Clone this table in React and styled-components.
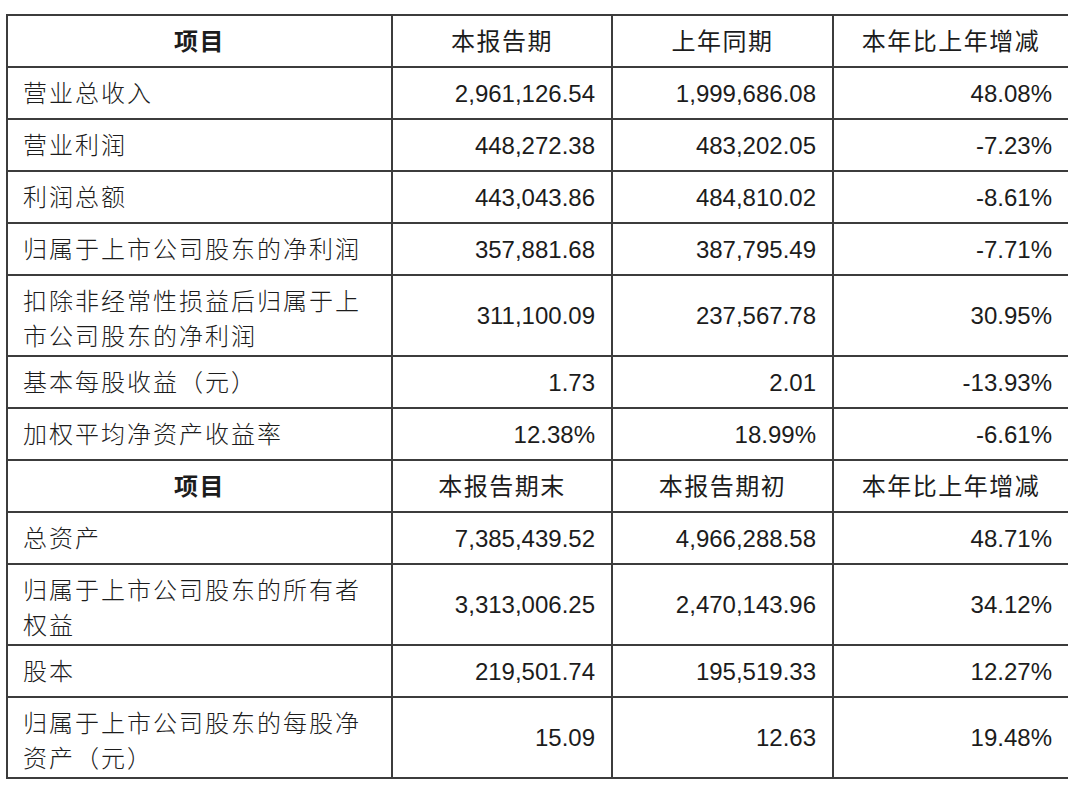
import styled, { createGlobalStyle } from 'styled-components';

const GlobalStyle = createGlobalStyle`
  body {
    margin: 0;
    background: #fff;
  }
`;

const Page = styled.div`
  padding: 14px 0 0 6px;
`;

const Grid = styled.div`
  display: grid;
  grid-template-columns: 383px 218px 219px 234px;
  gap: 2px;
  width: 1062px;
  box-sizing: border-box;
  padding: 2px;
  background: #3c3c3c;
  font-family: "Liberation Sans", "Noto Sans CJK SC", sans-serif;
  font-size: 24px;
  color: #1c1c1c;
`;

const Cell = styled.div`
  background: #fff;
  display: flex;
  align-items: center;
  justify-content: ${({ $align }) => ($align === 'right' ? 'flex-end' : $align === 'center' ? 'center' : 'flex-start')};
  padding: ${({ $align }) => ($align === 'right' ? '0 16px 0 0' : $align === 'center' ? '0' : '0 0 0 15px')};
  height: ${({ $tall }) => ($tall ? '79px' : '50px')};
  font-weight: ${({ $weight }) => $weight || 400};
  line-height: 35px;
  letter-spacing: ${({ $cjk }) => ($cjk ? '1.5px' : '0')};
`;

const Label = styled.span`
  display: block;
  max-width: 345px;
  font-weight: 300;
  letter-spacing: 2px;
  padding-top: ${({ $tall }) => ($tall ? '6px' : '0')};
`;

const first = [
  ['营业总收入', '2,961,126.54', '1,999,686.08', '48.08%'],
  ['营业利润', '448,272.38', '483,202.05', '-7.23%'],
  ['利润总额', '443,043.86', '484,810.02', '-8.61%'],
  ['归属于上市公司股东的净利润', '357,881.68', '387,795.49', '-7.71%'],
  ['扣除非经常性损益后归属于上市公司股东的净利润', '311,100.09', '237,567.78', '30.95%', true],
  ['基本每股收益（元）', '1.73', '2.01', '-13.93%'],
  ['加权平均净资产收益率', '12.38%', '18.99%', '-6.61%'],
];

const second = [
  ['总资产', '7,385,439.52', '4,966,288.58', '48.71%'],
  ['归属于上市公司股东的所有者权益', '3,313,006.25', '2,470,143.96', '34.12%', true],
  ['股本', '219,501.74', '195,519.33', '12.27%'],
  ['归属于上市公司股东的每股净资产（元）', '15.09', '12.63', '19.48%', true],
];

const HeaderRow = ({ cols }) => (
  <>
    <Cell $align="center" $weight={700} $cjk>项目</Cell>
    {cols.map((c) => (
      <Cell key={c} $align="center" $weight={400} $cjk>{c}</Cell>
    ))}
  </>
);

const DataRow = ({ row }) => {
  const [label, a, b, c, tall] = row;
  return (
    <>
      <Cell $tall={tall} $cjk><Label $tall={tall}>{label}</Label></Cell>
      <Cell $tall={tall} $align="right">{a}</Cell>
      <Cell $tall={tall} $align="right">{b}</Cell>
      <Cell $tall={tall} $align="right">{c}</Cell>
    </>
  );
};

const App = () => (
  <Page>
    <GlobalStyle />
    <Grid>
      <HeaderRow cols={['本报告期', '上年同期', '本年比上年增减']} />
      {first.map((r) => <DataRow key={r[0]} row={r} />)}
      <HeaderRow cols={['本报告期末', '本报告期初', '本年比上年增减']} />
      {second.map((r) => <DataRow key={r[0]} row={r} />)}
    </Grid>
  </Page>
);

export default App;
